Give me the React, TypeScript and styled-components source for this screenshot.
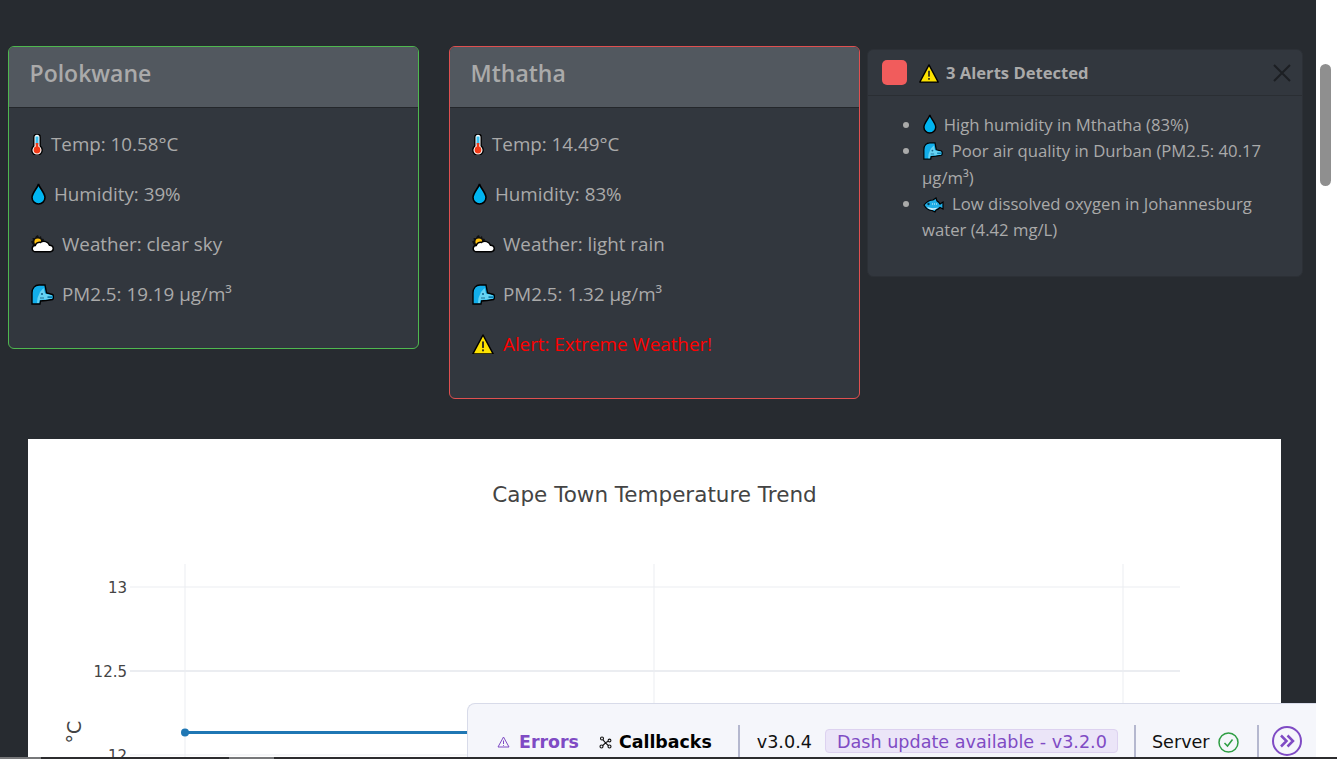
import React from 'react';
import styled, { createGlobalStyle } from 'styled-components';

const GlobalStyle = createGlobalStyle`
  html, body {
    margin: 0;
    height: 100%;
    overflow: hidden;
    background: #fff;
  }
  body {
    font-family: 'Open Sans', 'Noto Sans', sans-serif;
    color: #aaa;
  }
`;

const Thermometer = () => (
  <svg width="12" height="21" viewBox="0 0 12 21">
    <path d="M2.800 3.200a3.200 3.200 0 0 1 6.400 0v8.800a5.200 5.200 0 1 1-6.400 0z" fill="#fff" stroke="#000" strokeWidth="1.400" />
    <rect x="4.500" y="2.500" width="3" height="8" fill="#3cc0ee" />
    <rect x="4.700" y="9" width="2.600" height="5" fill="#f03a17" />
    <circle cx="6" cy="16" r="3.400" fill="#f03a17" />
  </svg>
);

const Droplet = () => (
  <svg width="15" height="22" viewBox="0 0 15 22">
    <path d="M7.500 1C6.500 5 1 10 1 14.500a6.500 6.500 0 0 0 13 0C14 10 8.500 5 7.500 1z" fill="#00b4f0" stroke="#000" strokeWidth="1.600" />
  </svg>
);

const SunCloud = () => (
  <svg width="23" height="18" viewBox="0 0 23 18">
    <path d="M7 0l1 2.500 2-1.500 .5 2.500 2.500 .5-2 6H2L1 8.500 0 6.500 2 5.500 1.500 3 4 3 5 1z" fill="#111" />
    <circle cx="6.800" cy="6.800" r="3.400" fill="#fdc010" />
    <path d="M4.500 16.800a3 3 0 0 1-.3-6.200 4.500 4.500 0 0 1 5.300-3.200 6 6 0 0 1 9 2.800 3.200 3.200 0 0 1 .8 6.600z" fill="#fff" stroke="#000" strokeWidth="1.500" />
  </svg>
);

const WindFace = () => (
  <svg width="23" height="21" viewBox="0 0 23 21">
    <path d="M1 20L1 9C1 4 4 1 8 1H14L15.500 9 21.500 10.500Q22.500 11 22.500 13T21.500 15.500L15 16.500 9.500 17 9 20Z" fill="#12aeea" stroke="#000" strokeWidth="1.400" />
    <path d="M6 19L6.500 14 9 8 12.500 4 14 9.500 21 11.500V14.500L15 15.500 8.500 16 8 19Z" fill="#66d3f3" />
    <circle cx="11" cy="10" r="1.100" fill="#14648c" />
    <path d="M16.500 12.300h4.500v1.600h-4.500z" fill="#0b7fb0" />
    <path d="M9 14h4" stroke="#14648c" strokeWidth="0.900" />
  </svg>
);

const Warning = ({ size }: { size: number }) => (
  <svg width={size} height={size * 0.95} viewBox="0 0 22 21">
    <path d="M11 1L21.200 20H.8z" fill="#fde200" stroke="#000" strokeWidth="1.500" strokeLinejoin="round" />
    <rect x="10.100" y="7.500" width="1.800" height="6.500" fill="#222" />
    <rect x="10.100" y="15.500" width="1.800" height="1.900" fill="#222" />
  </svg>
);

const Fish = () => (
  <svg width="21" height="16" viewBox="0 0 21 16">
    <path d="M1 8q4-5 9-5l3-2 1 3q2 1 3 3l3-2v7l-3-1.500q-2 2-4 2.500l-1 2-3-1.500Q4 13.500 1 8z" fill="#20aee6" stroke="#000" strokeWidth="1.200" />
    <path d="M4 10q5 2 11 .5-2.500 2.500-6 2.500-3 0-5-3z" fill="#c9eefa" />
    <circle cx="5.500" cy="7" r="1.200" fill="#06374d" />
    <path d="M9 7h5" stroke="#d8f4fc" strokeWidth="1" strokeDasharray="1 1" />
  </svg>
);

const readings = {
  polokwane: ['Temp: 10.58°C', 'Humidity: 39%', 'Weather: clear sky', 'PM2.5: 19.19 µg/m³'],
  mthatha: ['Temp: 14.49°C', 'Humidity: 83%', 'Weather: light rain', 'PM2.5: 1.32 µg/m³']
};

const WeatherCard = ({
  city,
  accent,
  values,
  alert
}: {
  city: string;
  accent: string;
  values: string[];
  alert?: boolean;
}) => (
  <Card $accent={accent}>
    <CardHeader>{city}</CardHeader>
    <CardBody>
      <Reading>
        <IconSlot $width={21}>
          <Thermometer />
        </IconSlot>
        {values[0]}
      </Reading>
      <Reading>
        <IconSlot $width={24}>
          <Droplet />
        </IconSlot>
        {values[1]}
      </Reading>
      <Reading>
        <IconSlot $width={32}>
          <SunCloud />
        </IconSlot>
        {values[2]}
      </Reading>
      <Reading>
        <IconSlot $width={32}>
          <WindFace />
        </IconSlot>
        {values[3]}
      </Reading>
      {alert && (
        <AlertReading>
          <IconSlot $width={32}>
            <Warning size={22} />
          </IconSlot>
          Alert: Extreme Weather!
        </AlertReading>
      )}
    </CardBody>
  </Card>
);

const TemperatureChart = () => (
  <ChartSvg viewBox="0 0 1253 450">
    <ChartTitle x="626.500" y="63">
      Cape Town Temperature Trend
    </ChartTitle>
    {[157, 626, 1095].map(x => (
      <line key={x} x1={x} x2={x} y1="125" y2="450" stroke="#ebedf1" />
    ))}
    <line x1="102" x2="1152" y1="148" y2="148" stroke="#ebedf1" />
    <line x1="102" x2="1152" y1="232" y2="232" stroke="#ebedf1" strokeWidth="2" />
    <line x1="102" x2="1152" y1="316" y2="316" stroke="#ebedf1" />
    <AxisLabel x="99" y="154">13</AxisLabel>
    <AxisLabel x="99" y="238">12.5</AxisLabel>
    <AxisLabel x="99" y="322">12</AxisLabel>
    <AxisTitle transform="translate(53 293) rotate(-90)">°C</AxisTitle>
    <line x1="157" x2="1095" y1="293.500" y2="293.500" stroke="#1f77b4" strokeWidth="3" />
    <circle cx="157" cy="293.500" r="4" fill="#1f77b4" />
  </ChartSvg>
);

export default () => (
  <>
    <GlobalStyle />
    <Frame>
      <Page>
        <CardRow>
          <WeatherCard city="Polokwane" accent="#4fb84f" values={readings.polokwane} />
          <WeatherCard city="Mthatha" accent="#e05050" values={readings.mthatha} alert />
        </CardRow>
        <ChartPanel>
          <TemperatureChart />
        </ChartPanel>

        <Toast>
          <ToastHeader>
            <RedSquare />
            <ToastIcon>
              <Warning size={20} />
            </ToastIcon>
            <ToastTitle>3 Alerts Detected</ToastTitle>
            <CloseIcon viewBox="0 0 18 18">
              <path d="M1 1l16 16M17 1L1 17" stroke="#1c1f23" strokeWidth="2" fill="none" />
            </CloseIcon>
          </ToastHeader>
          <AlertList>
            <li>
              <ItemIcon $gap={7} $height={20}>
                <Droplet />
              </ItemIcon>
              High humidity in Mthatha (83%)
            </li>
            <li>
              <ItemIcon $gap={9} $height={18}>
                <WindFace />
              </ItemIcon>
              Poor air quality in Durban (PM2.5: 40.17 µg/m³)
            </li>
            <li>
              <ItemIcon $gap={8} $height={16}>
                <Fish />
              </ItemIcon>
              Low dissolved oxygen in Johannesburg water (4.42 mg/L)
            </li>
          </AlertList>
        </Toast>

        <DebugBar>
          <DebugItems>
            <DebugLabel $purple>
              <svg width="13" height="12" viewBox="0 0 13 12" fill="none" stroke="#7f4bc4" strokeWidth="1">
                <path d="M6.500 1L12 11H1z" strokeLinejoin="round" />
                <path d="M6.500 4.500v3.500M6.500 9v.8" />
              </svg>
              Errors
            </DebugLabel>
            <DebugLabel>
              <svg width="13" height="13" viewBox="0 0 13 13" fill="none" stroke="#111" strokeWidth="1.100">
                <circle cx="3" cy="2.500" r="1.500" />
                <circle cx="10.500" cy="4.500" r="1.400" />
                <circle cx="2.500" cy="10.500" r="1.500" />
                <circle cx="10.500" cy="10.500" r="1.500" />
                <path d="M4 3.800l2.500 3M9.200 5.200L6.500 6.800M3.800 9.500l2.700-2.700M9.300 9.500L6.500 6.800" />
              </svg>
              Callbacks
            </DebugLabel>
            <Divider $left={26} />
            <Version>v3.0.4</Version>
            <UpdatePill>Dash update available - v3.2.0</UpdatePill>
            <Divider $left={16} />
            <ServerStatus>
              Server
              <svg width="21" height="21" viewBox="0 0 21 21" fill="none" stroke="#2f9e44" strokeWidth="1.500">
                <circle cx="10.500" cy="10.500" r="9.500" />
                <path d="M6.500 11l3 3 5-6.500" />
              </svg>
            </ServerStatus>
            <Divider $left={18} />
            <CollapseIcon viewBox="0 0 30 30" fill="none" stroke="#7f4bc4">
              <circle cx="15" cy="15" r="14" strokeWidth="2" />
              <path d="M9 9.500l5.500 5.500L9 20.500M15.500 9.500L21 15l-5.500 5.500" strokeWidth="2.500" />
            </CollapseIcon>
          </DebugItems>
        </DebugBar>
      </Page>
      <Gutter>
        <GutterThumb />
      </Gutter>
    </Frame>
    <BottomScroll>
      <BottomThumb $width={41} $margin={0} />
      <BottomThumb $width={45} $margin={188} />
    </BottomScroll>
  </>
);

const Frame = styled.div`
  display: flex;
  height: 757px;
`;
const Page = styled.div`
  position: relative;
  flex: 1;
  min-width: 0;
  overflow: hidden;
  padding-top: 46px;
  background: #272b30;
`;
const Gutter = styled.div`
  width: 21px;
  padding: 64px 6px 0 4px;
  box-sizing: border-box;
  background: #fff;
`;
const GutterThumb = styled.div`
  height: 122px;
  border-radius: 6px;
  background: #8f8f8f;
`;
const BottomScroll = styled.div`
  display: flex;
  height: 2px;
  background: #2c2c2e;
`;
const BottomThumb = styled.div<{ $width: number; $margin: number }>`
  width: ${p => p.$width}px;
  margin-left: ${p => p.$margin}px;
  background: #77787a;
`;
const CardRow = styled.div`
  display: flex;
  align-items: flex-start;
  gap: 30px;
  padding-left: 8px;
`;
const Card = styled.div<{ $accent: string }>`
  width: 411px;
  box-sizing: border-box;
  overflow: hidden;
  border: 1px solid ${p => p.$accent};
  border-radius: 6px;
  background: #32373e;
`;
const CardHeader = styled.div`
  height: 61px;
  padding-left: 20.500px;
  box-sizing: border-box;
  border-bottom: 1px solid #24272b;
  background: #52585f;
  color: #aaa;
  font-size: 23px;
  font-weight: 600;
  line-height: 52px;
`;
const CardBody = styled.div`
  display: flex;
  flex-direction: column;
  gap: 16px;
  padding: 19px 21px 37px;
`;
const Reading = styled.div`
  display: flex;
  align-items: center;
  height: 34px;
  font-size: 18.800px;
  color: #aaa;
`;
const AlertReading = styled(Reading)`
  color: #f00;
`;
const IconSlot = styled.span<{ $width: number }>`
  display: flex;
  flex: none;
  width: ${p => p.$width}px;
  margin-left: 1px;
  margin-right: -1px;
`;
const ChartPanel = styled.div`
  margin: 40px 35px 0 28px;
  background: #fff;
`;
const ChartSvg = styled.svg`
  display: block;
  width: 100%;
`;
const ChartTitle = styled.text`
  font-family: 'DejaVu Sans', Verdana, sans-serif;
  font-size: 21.500px;
  fill: #444;
  text-anchor: middle;
`;
const AxisLabel = styled.text`
  font-family: 'DejaVu Sans', Verdana, sans-serif;
  font-size: 15px;
  fill: #444;
  text-anchor: end;
`;
const AxisTitle = styled(AxisLabel)`
  font-size: 19px;
  text-anchor: middle;
`;
const Toast = styled.div`
  position: absolute;
  top: 49px;
  left: 867px;
  width: 436px;
  height: 228px;
  box-sizing: border-box;
  border: 1px solid #2c3036;
  border-radius: 6px;
  background: #32373e;
`;
const ToastHeader = styled.div`
  display: flex;
  align-items: center;
  height: 46px;
  padding: 0 11px 0 14px;
  box-sizing: border-box;
  border-bottom: 1px solid #2a2e33;
`;
const RedSquare = styled.span`
  width: 25px;
  height: 25px;
  border-radius: 5px;
  background: #f15c5c;
`;
const ToastIcon = styled.span`
  display: flex;
  margin: 2px 7px 0 12px;
`;
const ToastTitle = styled.strong`
  flex: 1;
  font-size: 16.600px;
  font-weight: 700;
  color: #aaa;
`;
const CloseIcon = styled.svg`
  width: 18px;
  height: 18px;
`;
const AlertList = styled.ul`
  margin: 0;
  padding: 16px 36px 0 54px;
  font-size: 16.700px;
  line-height: 26.300px;
  color: #aaa;
`;
const ItemIcon = styled.span<{ $gap: number; $height: number }>`
  display: inline-flex;
  vertical-align: -3px;
  margin: 0 ${p => p.$gap}px 0 1px;
  & > svg {
    width: auto;
    height: ${p => p.$height}px;
  }
`;
const DebugBar = styled.div`
  position: absolute;
  left: 467px;
  right: 0;
  bottom: 0;
  display: flex;
  align-items: flex-end;
  height: 54px;
  box-sizing: border-box;
  padding-left: 29px;
  border-top: 1px solid #d8dbe9;
  border-left: 1px solid #d8dbe9;
  border-top-left-radius: 8px;
  background: #f5f6fb;
  font-family: 'DejaVu Sans', Verdana, sans-serif;
  font-size: 17.600px;
  color: #111;
`;
const DebugItems = styled.div`
  display: flex;
  align-items: center;
  height: 32px;
  line-height: 24px;
`;
const DebugLabel = styled.span<{ $purple?: boolean }>`
  display: flex;
  align-items: center;
  gap: 9px;
  margin-right: 20px;
  padding-top: 2px;
  font-size: 17.400px;
  font-weight: 700;
  color: ${p => (p.$purple ? '#7f4bc4' : '#000')};
  &:nth-child(2) {
    gap: 7px;
    margin-right: 0;
  }
`;
const Divider = styled.span<{ $left: number }>`
  align-self: stretch;
  width: 2px;
  margin: 0 16px 0 ${p => p.$left}px;
  background: #b5b8cf;
`;
const Version = styled.span`
  margin: 0 13px 0 1px;
  padding-top: 2px;
`;
const UpdatePill = styled.span`
  display: flex;
  align-items: center;
  height: 24px;
  padding: 1px 10px 0 11px;
  box-sizing: border-box;
  border: 1px solid #ddd2f0;
  border-radius: 4px;
  background: #ebe5f8;
  color: #7f4bc4;
`;
const ServerStatus = styled.span`
  display: flex;
  align-items: center;
  gap: 8px;
  padding-top: 2px;
`;
const CollapseIcon = styled.svg`
  width: 30px;
  height: 30px;
  margin-left: -3px;
`;
